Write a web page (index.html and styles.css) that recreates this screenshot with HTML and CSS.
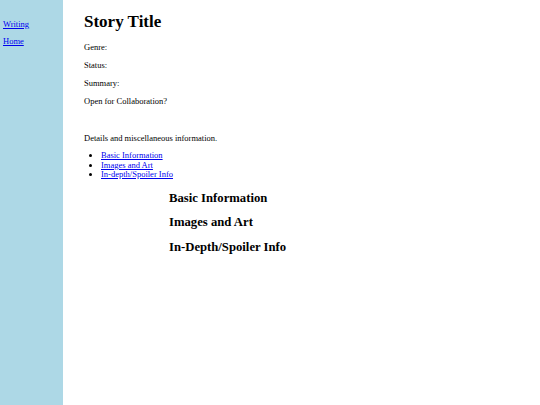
FILE: index.html
```html
<!DOCTYPE html>
<html>
<head>
<meta charset="utf-8">
<link rel="stylesheet" href="styles.css">
</head>
<body>
<div class="page">
  <nav class="sidebar">
    <a href="#">Writing</a>
    <a href="#">Home</a>
  </nav>
  <main class="content">
    <h1 class="title">Story Title</h1>
    <p class="field">Genre:</p>
    <p class="field">Status:</p>
    <p class="field">Summary:</p>
    <p class="field">Open for Collaboration?</p>
    <p class="details">Details and miscellaneous information.</p>
    <ul class="toc">
      <li><a href="#basic">Basic Information</a></li>
      <li><a href="#images">Images and Art</a></li>
      <li><a href="#spoiler">In-depth/Spoiler Info</a></li>
    </ul>
    <section class="sections">
      <h2 id="basic">Basic Information</h2>
      <h2 id="images">Images and Art</h2>
      <h2 id="spoiler">In-Depth/Spoiler Info</h2>
    </section>
  </main>
</div>
</body>
</html>
```

FILE: styles.css
```css
html, body {
  margin: 0;
  padding: 0;
  height: 100%;
}
body {
  font-family: "Liberation Serif", "Times New Roman", serif;
  font-size: 8.5px;
  color: #000;
  background: #fff;
}
.page {
  display: flex;
  min-height: 405px;
}
.sidebar {
  width: 63px;
  flex: none;
  background: #add8e6;
  display: flex;
  flex-direction: column;
  gap: 7px;
  padding: 19px 0 0 3px;
  box-sizing: border-box;
}
.sidebar a {
  color: #0000ee;
  line-height: 10px;
}
.content {
  padding-left: 21px;
  flex: 1;
}
.title {
  font-size: 17px;
  margin: 11px 0 10px;
  line-height: 21px;
}
.field {
  margin: 8px 0;
  line-height: 10px;
}
.details {
  margin: 27px 0 8px;
  line-height: 10px;
}
.toc {
  margin: 0;
  padding-left: 17px;
  line-height: 9.6px;
}
.toc a {
  color: #0000ee;
}
.sections {
  padding-left: 85px;
  padding-top: 6px;
}
.sections h2 {
  font-size: 12.7px;
  margin: 0;
  line-height: 15px;
  padding: 5px 0 4.6px;
}
```
